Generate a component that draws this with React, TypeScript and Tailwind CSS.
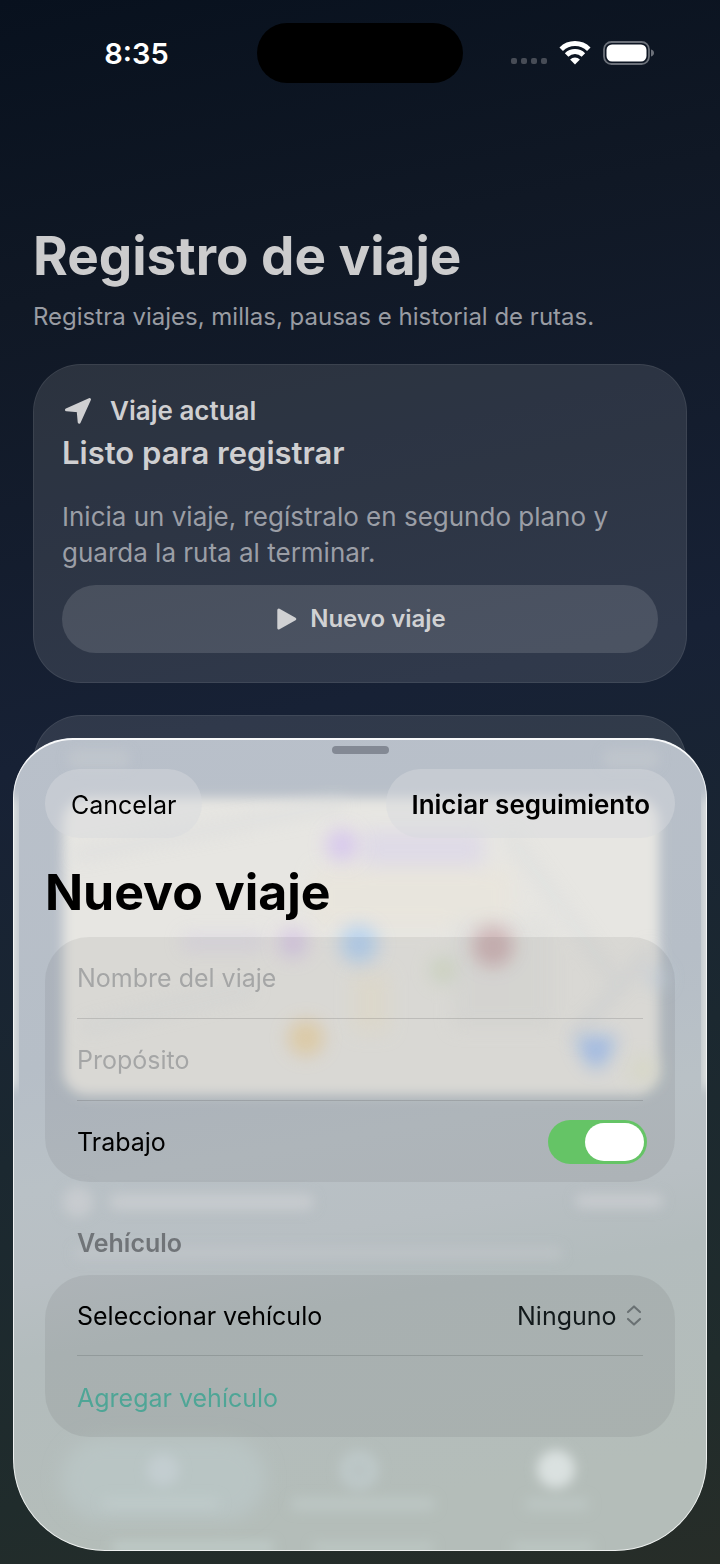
import { useState } from "react"
import type { ReactNode } from "react"

function StatusBar() {
  return (
    <header className="grid grid-cols-[1fr_206px_1fr] items-center pt-[23px]">
      <div className="pt-0.5 pl-4 text-center text-[29px] leading-8 font-semibold text-white">8:35</div>
      <div className="h-[60px] rounded-full bg-black" />
      <div className="flex items-center justify-center gap-3 pr-[18px]">
        {/* No signal dots */}
        <svg className="h-6 w-9" viewBox="0 0 36 24" fill="#474c56">
          <rect x="0" y="17" width="6" height="6" rx="2" />
          <rect x="10" y="17" width="6" height="6" rx="2" />
          <rect x="20" y="17" width="6" height="6" rx="2" />
          <rect x="30" y="17" width="6" height="6" rx="2" />
        </svg>
        <svg className="h-6 w-8" viewBox="0 0 32 24" fill="none" stroke="#fff" strokeWidth="5">
          <path d="M2.200 8.200a19.800 19.800 0 0 1 27.600 0" />
          <path d="M7.600 14a12 12 0 0 1 16.800 0" />
          <path d="M16 23.500l-4.900-5a7 7 0 0 1 9.800 0z" fill="#fff" stroke="none" />
        </svg>
        <svg className="h-6 w-[51px]" viewBox="0 0 51 24" fill="none">
          <rect x="1" y="1" width="45" height="22" rx="7.5" stroke="#6b7079" strokeWidth="1.8" />
          <rect x="3.5" y="3.5" width="40" height="17" rx="5.5" fill="#fff" />
          <path d="M48 8.500c2 .6 3 1.900 3 3.500s-1 2.900-3 3.500z" fill="#6b7079" />
        </svg>
      </div>
    </header>
  )
}

function CurrentTripCard() {
  return (
    <section className="mt-[31px] rounded-[48px] border border-white/8 bg-white/11 px-7 pt-7 pb-[29px]">
      <div className="flex items-center gap-[18px] pl-0.5">
        <svg className="h-7 w-7" viewBox="0 0 28 28" fill="#cfcfd1" stroke="#cfcfd1" strokeWidth="3" strokeLinejoin="round">
          <path d="M2.500 12.800L25.500 2.500L15.200 25.200L14.200 13.800z" />
        </svg>
        <h2 className="text-[26px] leading-9 font-semibold text-[#cfcfd1]">Viaje actual</h2>
      </div>
      <p className="mt-0.5 text-[31px] leading-[44px] font-semibold text-[#cfcfd1]">Listo para registrar</p>
      <p className="mt-6 text-[26px] leading-9 text-[#9b9ea6]">
        Inicia un viaje, regístralo en segundo plano y guarda la ruta al terminar.
      </p>
      <button className="mt-3.5 flex h-[68px] w-full items-center justify-center gap-3 rounded-full bg-white/13 pl-0.5 text-[24px] font-semibold text-[#d0d1d3]">
        <svg className="h-6 w-[22px]" viewBox="0 0 22 24" fill="currentColor" stroke="currentColor" strokeWidth="3" strokeLinejoin="round">
          <path d="M2.800 3L18.800 12L2.800 21z" />
        </svg>
        Nuevo viaje
      </button>
    </section>
  )
}

/* Frosted view of the map and tab bar that lie under the sheet */
function SheetBackdrop() {
  return (
    <svg
      className="absolute inset-0 -z-10 h-full w-full"
      viewBox="0 0 694 813"
      preserveAspectRatio="none"
      aria-hidden="true"
    >
      <defs>
        <linearGradient id="glass" x1="0" y1="0" x2="0.15" y2="1">
          <stop offset="0" stopColor="#b9c0ca" />
          <stop offset="0.4" stopColor="#b6bec7" />
          <stop offset="0.55" stopColor="#b9c1c6" />
          <stop offset="0.66" stopColor="#b8bfc3" />
          <stop offset="0.75" stopColor="#b3bcbd" />
          <stop offset="1" stopColor="#b4bdb9" />
        </linearGradient>
        <filter id="soft" x="-20%" y="-20%" width="140%" height="140%">
          <feGaussianBlur stdDeviation="6" />
        </filter>
        <filter id="softer" x="-50%" y="-50%" width="200%" height="200%">
          <feGaussianBlur stdDeviation="9" />
        </filter>
      </defs>
      <rect width="694" height="813" fill="url(#glass)" />

      {/* Map tile and its mirrored rim */}
      <g filter="url(#soft)">
        <rect x="50" y="60" width="596" height="297" rx="24" fill="#e7e6e2" />
      </g>
      <rect x="-8" y="60" width="11" height="290" fill="#eceeea" filter="url(#soft)" />
      <rect x="691" y="60" width="11" height="290" fill="#eceeea" filter="url(#soft)" />

      <g filter="url(#softer)" opacity="0.8">
        <path d="M60 118L330 66" stroke="#dadcdd" strokeWidth="9" />
        <path d="M495 95L600 240" stroke="#dbdddd" strokeWidth="9" />
        <path d="M560 300L640 210" stroke="#d7dadd" strokeWidth="9" />
        <path d="M70 290L240 250" stroke="#dee0e0" strokeWidth="10" />
        <rect x="300" y="130" width="200" height="60" fill="#e9e5dc" />
        <rect x="350" y="92" width="120" height="36" fill="#ddd8e8" />
        <rect x="170" y="196" width="80" height="16" fill="#ddd8e5" />
        <rect x="340" y="235" width="36" height="60" fill="#eae5d5" />
        <rect x="440" y="180" width="100" height="110" fill="#e1e1de" />
        <circle cx="644" cy="240" r="10" fill="#cbd7e4" />
        <circle cx="430" cy="232" r="14" fill="#d5dec8" />
        <circle cx="630" cy="332" r="14" fill="#e4e5d0" />
      </g>
      <g filter="url(#softer)" opacity="0.7">
        <circle cx="329" cy="107" r="16" fill="#d2bdf2" />
        <circle cx="280" cy="205" r="15" fill="#d3c0e6" />
        <circle cx="346" cy="206" r="19" fill="#a6cbf4" />
        <circle cx="480" cy="208" r="21" fill="#c7a4a7" />
        <circle cx="293" cy="300" r="18" fill="#ebd09c" />
        <path d="M562 298h42l-8 22-13 13-13-13z" fill="#93b9f5" />
      </g>

      {/* Trip history rows */}
      <g filter="url(#soft)" fill="#c7cbcf">
        <rect x="55" y="12" width="62" height="18" rx="8" opacity="0.5" />
        <rect x="590" y="12" width="56" height="18" rx="8" opacity="0.5" />
        <circle cx="65" cy="464" r="15" />
        <rect x="96" y="456" width="205" height="16" rx="8" />
        <rect x="562" y="456" width="88" height="14" rx="7" />
        <rect x="60" y="508" width="490" height="14" rx="7" opacity="0.4" />
      </g>

      {/* Tab bar */}
      <g filter="url(#softer)">
        <rect x="48" y="700" width="205" height="82" rx="41" fill="#b9c5c4" />
      </g>
      <g filter="url(#soft)">
        <circle cx="150" cy="732" r="16" fill="#c3cdd0" />
        <circle cx="346" cy="732" r="20" fill="#bdc8c8" />
        <circle cx="346" cy="732" r="7" fill="#b8c3c3" />
        <circle cx="543" cy="731" r="19" fill="#dae1e0" />
        <rect x="278" y="760" width="144" height="12" rx="6" fill="#bdc7c5" />
        <rect x="512" y="760" width="64" height="12" rx="6" fill="#bcc6c3" />
        <rect x="90" y="760" width="116" height="10" rx="5" fill="#bfcbca" />
        <rect x="100" y="805" width="160" height="8" fill="#c2cfcc" />
        <rect x="300" y="806" width="120" height="7" fill="#c0cbc7" />
        <rect x="500" y="806" width="80" height="7" fill="#c0cbc7" />
      </g>
    </svg>
  )
}

function FormGroup({ children }: { children: ReactNode }) {
  return <div className="rounded-[44px] bg-black/6">{children}</div>
}

function Separator() {
  return <div className="mx-8 h-px bg-black/13" />
}

function NewTripSheet() {
  const [name, setName] = useState("")
  const [purpose, setPurpose] = useState("")
  const [isWork, setIsWork] = useState(true)
  const [vehicle, setVehicle] = useState("none")

  return (
    <div
      role="dialog"
      aria-labelledby="sheet-title"
      className="absolute inset-x-[13px] bottom-[13px] isolate overflow-hidden rounded-t-[60px] rounded-b-[92px] px-8 pt-2 pb-[114px] text-[25px] leading-8 text-black"
    >
      <SheetBackdrop />
      <div className="pointer-events-none absolute inset-0 rounded-t-[60px] rounded-b-[92px] border border-t-2 border-white/75 border-t-white/90" />

      <div className="mx-auto h-2 w-[57px] rounded-full bg-[#838994]" />

      <div className="mt-[15px] flex h-[69px] items-stretch justify-between">
        <button className="rounded-full bg-[#d8dade]/45 px-[26px] pt-0.5">Cancelar</button>
        <button className="rounded-full bg-[#d8dade]/45 px-[25px] pt-0.5 text-[26px] font-semibold">
          Iniciar seguimiento
        </button>
      </div>

      <h2 id="sheet-title" className="mt-[22px] mb-[13px] text-[50px] leading-[64px] font-bold">
        Nuevo viaje
      </h2>

      <FormGroup>
        <input
          className="block h-[81px] w-full bg-transparent px-8 outline-none placeholder:text-[#a5a6a6]"
          aria-label="Nombre del viaje"
          placeholder="Nombre del viaje"
          value={name}
          onChange={(e) => setName(e.target.value)}
        />
        <Separator />
        <input
          className="block h-[81px] w-full bg-transparent px-8 outline-none placeholder:text-[#a5a6a6]"
          aria-label="Propósito"
          placeholder="Propósito"
          value={purpose}
          onChange={(e) => setPurpose(e.target.value)}
        />
        <Separator />
        <label className="flex h-[81px] items-center justify-between pr-7 pl-8">
          Trabajo
          <input
            type="checkbox"
            role="switch"
            className="flex h-11 w-[99px] appearance-none items-center rounded-full bg-[#aeb2b5] px-[3px] before:h-[38px] before:w-[59px] before:rounded-full before:bg-white before:content-[''] checked:justify-end checked:bg-[#65c466]"
            checked={isWork}
            onChange={(e) => setIsWork(e.target.checked)}
          />
        </label>
      </FormGroup>

      <h3 className="mt-[45px] mb-4 px-8 font-semibold text-[#707478]">Vehículo</h3>

      <FormGroup>
        <div className="flex h-20 items-center justify-between px-8 pt-0.5">
          <label htmlFor="vehicle">Seleccionar vehículo</label>
          <div className="flex items-center gap-2">
            <select
              id="vehicle"
              className="appearance-none bg-transparent text-[#12191b] outline-none"
              value={vehicle}
              onChange={(e) => setVehicle(e.target.value)}
            >
              <option value="none">Ninguno</option>
            </select>
            <svg className="h-6 w-[18px]" viewBox="0 0 18 24" fill="none" stroke="#6a7173" strokeWidth="2.2" strokeLinecap="round" strokeLinejoin="round">
              <path d="M3 8L9 2.500L15 8" />
              <path d="M3 15L9 20.500L15 15" />
            </svg>
          </div>
        </div>
        <Separator />
        <button className="block h-[81px] w-full px-8 pt-0.5 text-left text-[#4fa596]">Agregar vehículo</button>
      </FormGroup>
    </div>
  )
}

export default function App() {
  return (
    <div className="relative flex min-h-screen flex-col overflow-hidden bg-[linear-gradient(168deg,#08111e_0%,#101825_18%,#172135_45%,#1b2830_68%,#202c2c_88%,#272d28_100%)] font-[Inter,'Liberation_Sans',sans-serif]">
      <StatusBar />
      <main className="px-[33px] pt-[141px]">
        <h1 className="text-[53px] leading-[64px] font-bold text-[#cccccd]">Registro de viaje</h1>
        <p className="mt-[13px] text-[24px] leading-8 text-[#999ca3]">
          Registra viajes, millas, pausas e historial de rutas.
        </p>
        <CurrentTripCard />
        <section className="mt-8 h-[420px] rounded-[48px] border border-white/8 bg-white/11" />
      </main>
      <NewTripSheet />
    </div>
  )
}
